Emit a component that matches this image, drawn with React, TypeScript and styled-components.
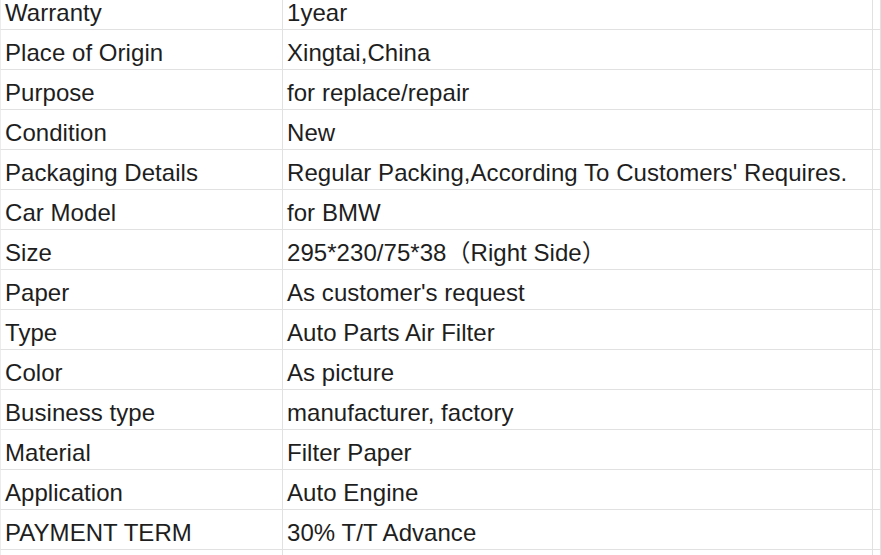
import { createGlobalStyle } from 'styled-components'
import styled from 'styled-components'

const Global = createGlobalStyle`
  html, body {
    margin: 0;
    padding: 0;
    background: #ffffff;
    overflow: hidden;
  }
`

const Page = styled.div`
  width: 881px;
  height: 555px;
  overflow: hidden;
`

const Sheet = styled.div`
  display: grid;
  grid-template-columns: 283px 590px 1fr;
  margin-top: -10px;
  font-family: 'Liberation Sans', Arial, 'Noto Sans CJK SC', sans-serif;
  font-size: 24px;
  letter-spacing: 0.05px;
  color: #1e1e1e;
`

const Cell = styled.div<{ $first?: boolean }>`
  border-bottom: 1px solid #e1e1e1;
  border-right: 1px solid #e1e1e1;
  border-left: ${(p) => (p.$first ? '1px solid #ececec' : 'none')};
  padding: 9px 0 0 ${(p) => (p.$first ? '4px' : '4px')};
  box-sizing: content-box;
  height: 30px;
  line-height: 27px;
  white-space: nowrap;
  overflow: hidden;
`

const rows = [
  ['Warranty', '1year'],
  ['Place of Origin', 'Xingtai,China'],
  ['Purpose', 'for replace/repair'],
  ['Condition', 'New'],
  ['Packaging Details', "Regular Packing,According To Customers' Requires."],
  ['Car Model', 'for BMW'],
  ['Size', '295*230/75*38（Right Side）'],
  ['Paper', "As customer's request"],
  ['Type', 'Auto Parts Air Filter'],
  ['Color', 'As picture'],
  ['Business type', 'manufacturer, factory'],
  ['Material', 'Filter Paper'],
  ['Application', 'Auto Engine'],
  ['PAYMENT TERM', '30% T/T Advance'],
  ['', ''],
]

const App = () => {
  return (
    <Page>
      <Global />
      <Sheet>
        {rows.map((r, i) => (
          <div key={i} style={{ display: 'contents' }}>
            <Cell $first>{r[0]}</Cell>
            <Cell>{r[1]}</Cell>
            <Cell />
          </div>
        ))}
      </Sheet>
    </Page>
  )
}

export default App
